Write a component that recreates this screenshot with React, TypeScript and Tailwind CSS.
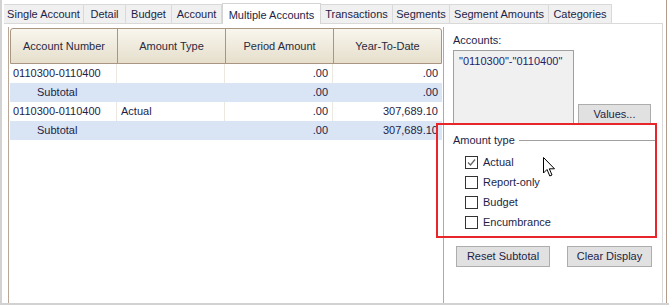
const tabs = [
  { label: "Single Account", w: "w-[80px]" },
  { label: "Detail", w: "w-[42px]" },
  { label: "Budget", w: "w-[46px]" },
  { label: "Account", w: "w-[50px]" },
  { label: "Multiple Accounts", w: "w-[99px]", active: true },
  { label: "Transactions", w: "w-[72px]" },
  { label: "Segments", w: "w-[57px]" },
  { label: "Segment Amounts", w: "w-[99px]" },
  { label: "Categories", w: "w-[63px]" },
];

const rows = [
  { acct: "0110300-0110400", type: "", period: ".00", ytd: ".00" },
  { acct: "Subtotal", type: "", period: ".00", ytd: ".00", sub: true },
  { acct: "0110300-0110400", type: "Actual", period: ".00", ytd: "307,689.10" },
  { acct: "Subtotal", type: "", period: ".00", ytd: "307,689.10", sub: true },
];

const amountTypes = [
  { label: "Actual", checked: true },
  { label: "Report-only" },
  { label: "Budget" },
  { label: "Encumbrance" },
];

function Checkbox({ checked }: { checked?: boolean }) {
  return (
    <span className="flex h-[13px] w-[13px] items-center justify-center border border-[#333] bg-white">
      {checked && (
        <svg width="9" height="9" viewBox="0 0 9 9">
          <path d="M1 4.5 L3.5 7 L8 1.5" fill="none" stroke="#666" strokeWidth="1.3" />
        </svg>
      )}
    </span>
  );
}

export default function App() {
  return (
    <div
      className="relative h-[305px] w-[669px] overflow-hidden bg-white text-[11px] text-[#1e1e46]"
      style={{ fontFamily: '"Liberation Sans", Arial, sans-serif' }}
    >
      <div className="flex h-[303px] flex-col border-l-2 border-[#d2d2d2] pl-[2px] pr-[6px]">
        {/* tab strip */}
        <div className="flex h-[23px] items-end">
          {tabs.map((t) =>
            t.active ? (
              <div
                key={t.label}
                className={`${t.w} relative z-10 -mb-px flex h-[21px] items-start justify-center border border-b-0 border-[#d4d4d4] bg-white pt-[3px]`}
              >
                {t.label}
              </div>
            ) : (
              <div
                key={t.label}
                className={`${t.w} flex h-[19px] items-center justify-center border-r border-t border-[#d9d9d9] bg-[#f0f0f0]`}
              >
                {t.label}
              </div>
            )
          )}
        </div>

        {/* panel */}
        <div className="flex flex-1 border-r border-t border-[#d9d9d9] bg-white">
          {/* grid */}
          <div className="ml-[4px] mt-[3px] flex w-[436px] flex-col border-x border-[#b9a898] px-px pt-px">
            <div className="flex h-[36px] rounded-t-[3px] border border-[#a89683] bg-gradient-to-b from-[#f8f6ee] via-[#efeadc] to-[#e6dfcd] text-[#2a2a40]">
              <div className="flex w-[107px] items-center justify-center border-r border-[#a89683]">Account Number</div>
              <div className="flex w-[108px] items-center justify-center border-r border-[#a89683]">Amount Type</div>
              <div className="flex w-[108px] items-center justify-center border-r border-[#a89683]">Period Amount</div>
              <div className="flex flex-1 items-center justify-center">Year-To-Date</div>
            </div>
            {rows.map((r, i) => (
              <div key={i} className={`flex h-[19px] items-center ${r.sub ? "bg-[#d9e4f5]" : "bg-white"}`}>
                <div className={`flex h-full w-[107px] items-center border-r ${r.sub ? "border-transparent pl-[27px]" : "border-[#ece8e0] pl-[3px]"}`}>
                  {r.acct}
                </div>
                <div className={`flex h-full w-[108px] items-center border-r pl-[4px] ${r.sub ? "border-transparent" : "border-[#ece8e0]"}`}>
                  {r.type}
                </div>
                <div className={`flex h-full w-[108px] items-center justify-end border-r pr-[4px] ${r.sub ? "border-transparent" : "border-[#ece8e0]"}`}>
                  {r.period}
                </div>
                <div className="flex h-full flex-1 items-center justify-end pr-[4px]">{r.ytd}</div>
              </div>
            ))}
          </div>

          {/* right side */}
          <div className="flex flex-1 flex-col pl-[9px] pt-[10px]">
            <div className="leading-[13px]">Accounts:</div>
            <div className="mt-[3px] flex items-end">
              <div className="h-[74px] w-[121px] border border-[#a0a0a0] bg-[#f0f0f0] px-[5px] pt-[2px] text-[#1e1e6e]">
                "0110300"-"0110400"
              </div>
              <button className="ml-[4px] h-[20px] w-[73px] border border-[#adadad] bg-[#e1e1e1] text-[11px]">
                Values...
              </button>
            </div>

            <div className="mt-[10px] flex items-center pr-[6px]">
              <span className="leading-[13px]">Amount type</span>
              <span className="ml-[4px] h-px flex-1 bg-[#a0a0a0]" />
            </div>
            <div className="mt-[5px] flex flex-col pl-[12px]">
              {amountTypes.map((a) => (
                <div key={a.label} className="flex h-[20px] items-center gap-[5px]">
                  <Checkbox checked={a.checked} />
                  <span>{a.label}</span>
                </div>
              ))}
            </div>

            <div className="mt-[14px] flex gap-[17px] pl-[3px]">
              <button className="h-[21px] w-[94px] border border-[#adadad] bg-[#e1e1e1] text-[11px]">Reset Subtotal</button>
              <button className="h-[21px] w-[85px] border border-[#adadad] bg-[#e1e1e1] text-[11px]">Clear Display</button>
            </div>
          </div>
        </div>
      </div>
      <div className="h-[2px] w-full bg-[#d2d2d2]" />

      {/* right edge line */}
      <div className="absolute right-[2px] top-0 h-[303px] w-px bg-[#b09c8c]" />

      {/* red annotation box */}
      <div className="pointer-events-none absolute left-[436px] top-[123px] h-[115px] w-[221px] border-2 border-[#e8262a]" />

      {/* mouse cursor */}
      <svg className="absolute left-[543px] top-[157px]" width="14" height="22" viewBox="0 0 14 22">
        <path d="M0.5 0.5 L0.5 16 L4 12.5 L6.8 19 L9 18 L6.3 11.8 L11.5 11.8 Z" fill="white" stroke="black" strokeWidth="1" />
      </svg>
    </div>
  );
}
